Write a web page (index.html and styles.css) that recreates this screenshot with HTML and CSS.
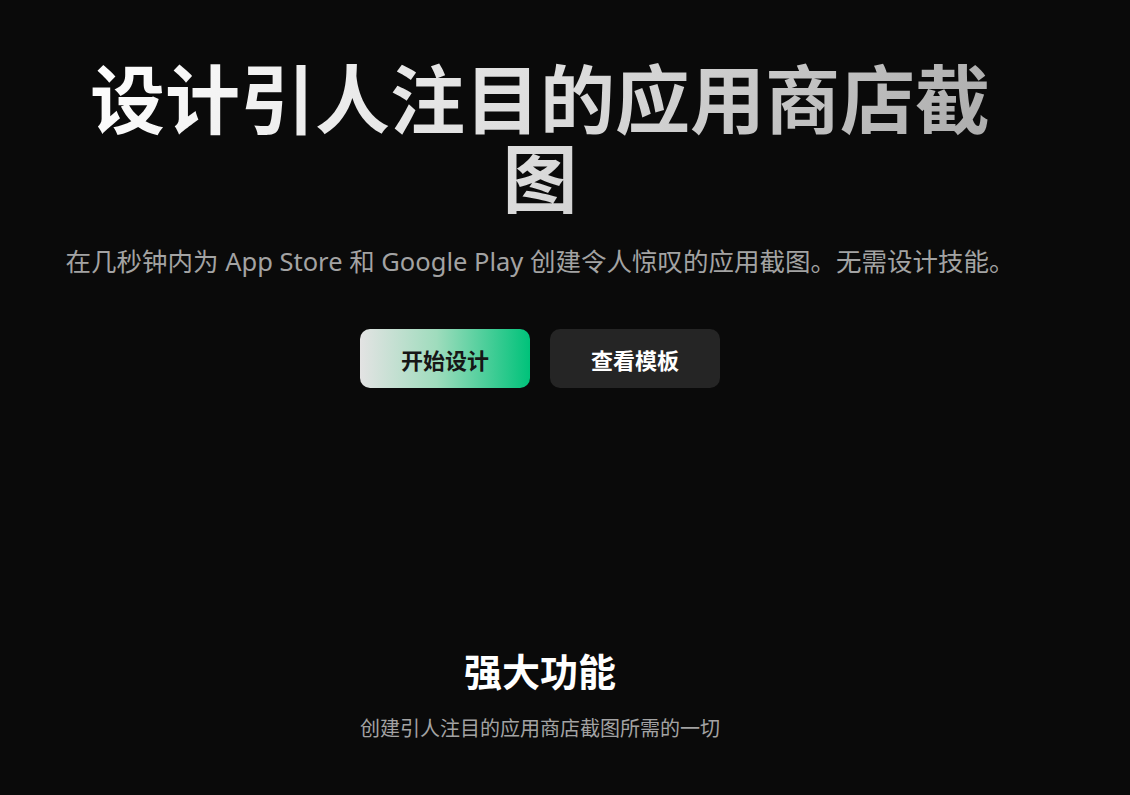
FILE: index.html
```html
<!DOCTYPE html>
<html lang="zh-CN">
<head>
<meta charset="utf-8">
<title>设计引人注目的应用商店截图</title>
<link rel="stylesheet" href="styles.css">
</head>
<body>
<main class="page">
  <section class="hero">
    <h1 class="hero-title">设计引人注目的应用商店截图</h1>
    <p class="hero-sub">在几秒钟内为 App Store 和 Google Play 创建令人惊叹的应用截图。无需设计技能。</p>
    <div class="hero-actions">
      <a class="btn btn-primary" href="#">开始设计</a>
      <a class="btn btn-secondary" href="#">查看模板</a>
    </div>
  </section>
  <section class="features">
    <h2 class="features-title">强大功能</h2>
    <p class="features-sub">创建引人注目的应用商店截图所需的一切</p>
  </section>
</main>
</body>
</html>
```
FILE: styles.css
```css
html, body {
  margin: 0;
  padding: 0;
  background: #0a0a0a;
}
body {
  font-family: "Noto Sans", "Noto Sans CJK SC", sans-serif;
  color: #ffffff;
  height: 795px;
  overflow: hidden;
}
.page {
  width: 1080px;
}
.hero {
  display: flex;
  flex-direction: column;
  align-items: center;
  padding-top: 56px;
  text-align: center;
}
.hero-title {
  margin: 0;
  max-width: 930px;
  font-family: "Noto Sans CJK SC", sans-serif;
  font-size: 75px;
  font-weight: 700;
  line-height: 79px;
  background: linear-gradient(120deg, #ffffff 0%, #dcdcdc 50%, #a6a6a6 100%);
  -webkit-background-clip: text;
  background-clip: text;
  color: transparent;
}
.hero-sub {
  margin: 31px 0 0;
  font-size: 25.5px;
  line-height: 32px;
  color: #a3a3a3;
  white-space: nowrap;
}
.hero-actions {
  display: flex;
  gap: 20px;
  margin-top: 52px;
}
.btn {
  display: flex;
  align-items: center;
  justify-content: center;
  width: 170px;
  height: 59px;
  border-radius: 10px;
  font-family: "Noto Sans CJK SC", sans-serif;
  font-size: 22px;
  font-weight: 700;
  text-decoration: none;
  box-sizing: border-box;
}
.btn-primary {
  background: linear-gradient(90deg, #e3e3e3 0%, #9fdcbd 45%, #00c27a 100%);
  color: #161616;
}
.btn-secondary {
  background: #252525;
  color: #ffffff;
}
.features {
  display: flex;
  flex-direction: column;
  align-items: center;
  margin-top: 258px;
  text-align: center;
}
.features-title {
  margin: 0;
  font-family: "Noto Sans CJK SC", sans-serif;
  font-size: 38px;
  font-weight: 700;
  line-height: 48px;
  color: #ffffff;
}
.features-sub {
  margin: 21px 0 0;
  font-size: 20px;
  line-height: 28px;
  color: #a3a3a3;
}
```
